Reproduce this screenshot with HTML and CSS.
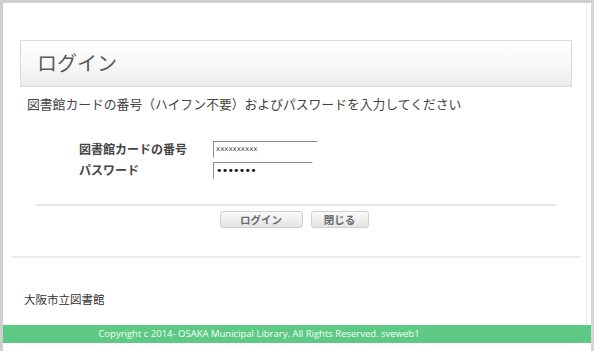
FILE: index.html
```html
<!DOCTYPE html>
<html lang="ja">
<head>
<meta charset="utf-8">
<title>ログイン</title>
<link rel="stylesheet" href="styles.css">
</head>
<body>
<div class="frame">
  <div class="page">
    <div class="content">
      <h1 class="title">ログイン</h1>
      <p class="lead">図書館カードの番号（ハイフン不要）およびパスワードを入力してください</p>
      <form class="form">
        <div class="fields">
          <label class="label" for="card">図書館カードの番号</label>
          <input class="input input-card" id="card" type="text" value="xxxxxxxxxx">
          <label class="label" for="pw">パスワード</label>
          <input class="input input-pw" id="pw" type="password" value="1234567">
        </div>
        <div class="actions">
          <button type="button" class="btn btn-login">ログイン</button>
          <button type="button" class="btn btn-close">閉じる</button>
        </div>
      </form>
    </div>
    <div class="foot">
      <div class="org">大阪市立図書館</div>
    </div>
  </div>
  <div class="copyright">Copyright c 2014- OSAKA Municipal Library. All Rights Reserved. sveweb1</div>
</div>
</body>
</html>
```

FILE: styles.css
```css
html, body {
  margin: 0;
  padding: 0;
  background: #ffffff;
}

body {
  font-family: "Noto Sans CJK JP", "Open Sans", sans-serif;
  color: #444;
}

.frame {
  width: 594px;
  height: 351px;
  box-sizing: border-box;
  border-top: 3px solid #cfcfcf;
  border-left: 3px solid #cfcfcf;
  border-right: 3px solid #d6d6d6;
  display: flex;
  flex-direction: column;
  overflow: hidden;
}

.page {
  margin-right: 4px;
  border-right: 1px solid #ececec;
  height: 322px;
  box-sizing: border-box;
}

.content {
  padding: 37px 0 0 17px;
}

.title {
  margin: 0;
  width: 552px;
  height: 47px;
  box-sizing: border-box;
  border: 1px solid #dcdcdc;
  background: linear-gradient(#ffffff 0%, #f7f7f7 55%, #ececec 100%);
  font-size: 20px;
  font-weight: normal;
  color: #5a5a5a;
  line-height: 44px;
  padding-left: 16px;
}

.lead {
  margin: 8px 0 0 7px;
  font-size: 12.8px;
  line-height: 18px;
  color: #444;
}

.form {
  margin: 0;
}

.fields {
  display: grid;
  grid-template-columns: 134px auto;
  row-gap: 3px;
  align-items: center;
  margin: 27px 0 0 59px;
}

.label {
  font-size: 12px;
  font-weight: bold;
  color: #444;
  line-height: 18px;
}

.input {
  height: 17px;
  box-sizing: border-box;
  margin: 0;
  padding: 0 0 0 2px;
  border-top: 1px solid #8c8c8c;
  border-left: 1px solid #8c8c8c;
  border-right: 1px solid #ffffff;
  border-bottom: 1px solid #ffffff;
  background: #fff;
  font-family: "DejaVu Sans", sans-serif;
  color: #444;
  outline: none;
  justify-self: start;
}

.input-card {
  width: 105px;
  font-size: 7px;
}

.input-pw {
  width: 100px;
  font-size: 11px;
  color: #111;
  letter-spacing: -0.8px;
}

.actions {
  margin: 25px 0 0 16px;
  width: 520px;
  border-top: 2px solid #e6e6e6;
  padding-top: 5px;
  display: flex;
  justify-content: center;
  gap: 8px;
  padding-right: 4px;
  box-sizing: border-box;
}

.btn {
  height: 17px;
  margin: 0;
  padding: 0;
  border: 1px solid #cfcfcf;
  border-radius: 3px;
  background: linear-gradient(#fafafa, #e4e4e4);
  font-family: "Noto Sans CJK JP", sans-serif;
  font-size: 10.5px;
  font-weight: bold;
  color: #6a6a6a;
  line-height: 14px;
}

.btn-login {
  width: 83px;
}

.btn-close {
  width: 58px;
}

.foot {
  margin: 28px 0 0 9px;
  width: 568px;
  border-top: 2px solid #ececec;
}

.org {
  margin: 33px 0 0 12px;
  font-size: 11.5px;
  color: #333;
  line-height: 16px;
}

.copyright {
  height: 18px;
  background: #5ec984;
  color: #f4fff6;
  font-family: "Open Sans", sans-serif;
  font-size: 9.5px;
  line-height: 18px;
  text-align: center;
  padding-right: 76px;
}
```
